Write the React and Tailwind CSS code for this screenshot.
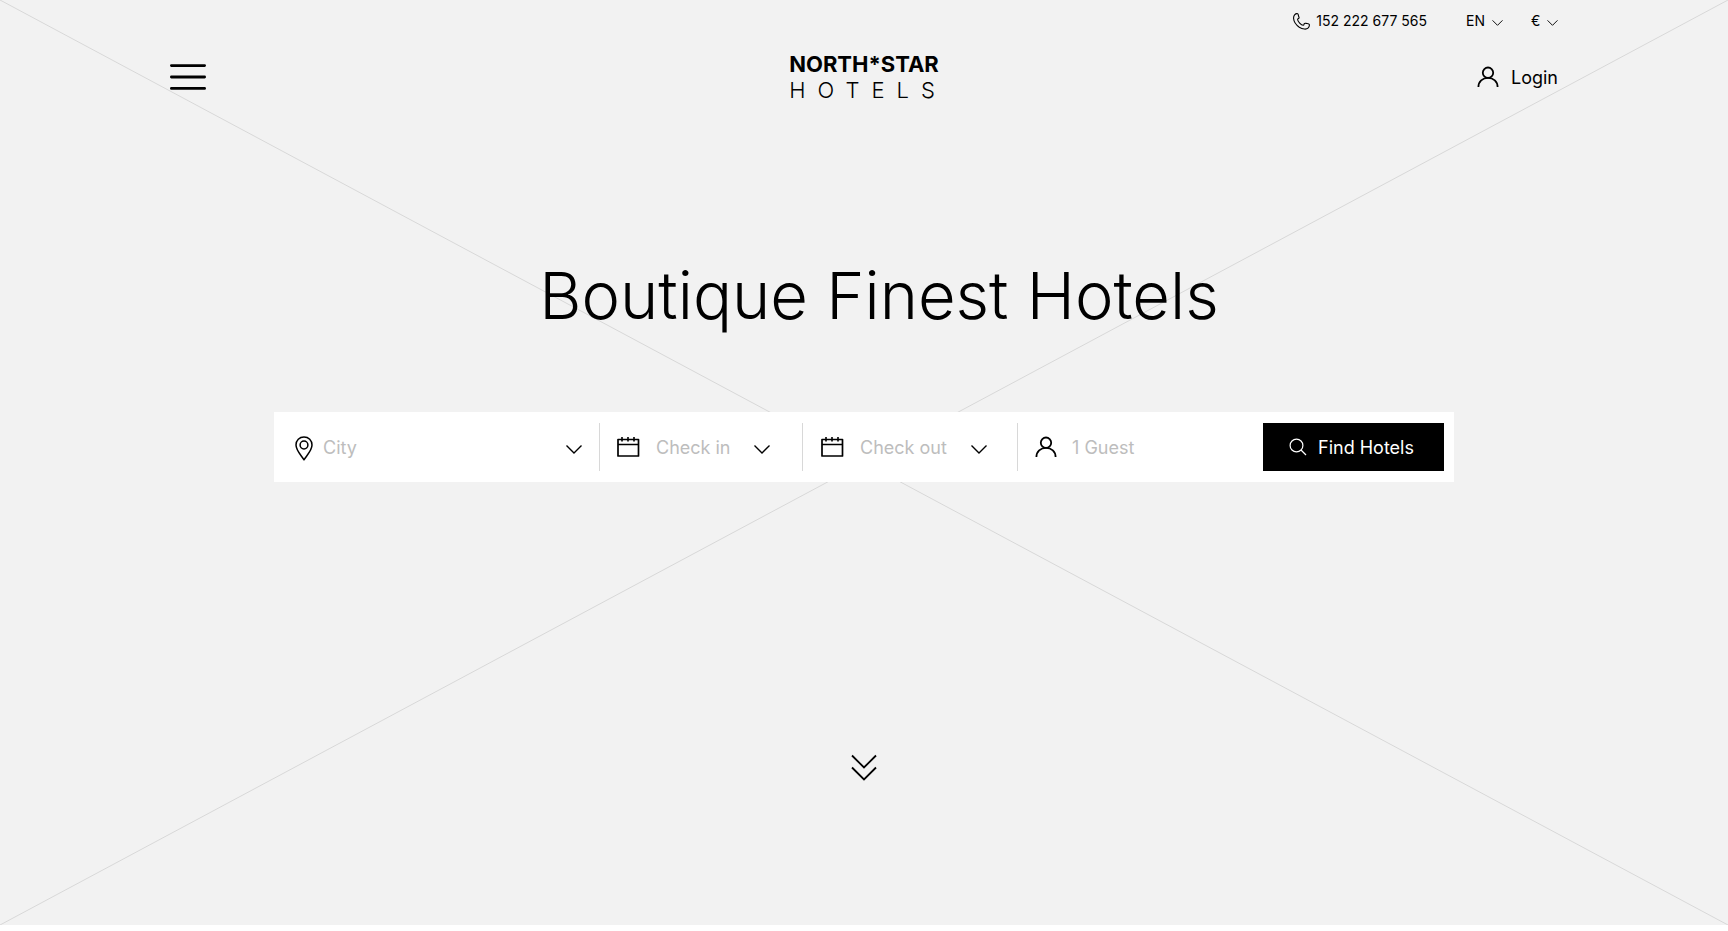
import { useState } from "react"

const ChevronIcon = ({ className }) => (
  <svg viewBox="0 0 16 9" fill="none" stroke="currentColor" className={className} aria-hidden="true">
    <path d="M0.5 0.5L8 8L15.5 0.5" strokeWidth="1.4" />
  </svg>
)

const UserIcon = () => (
  <svg viewBox="0 0 22 22" fill="none" stroke="currentColor" strokeWidth="1.8" className="w-[22px] h-[22px] shrink-0" aria-hidden="true">
    <circle cx="11" cy="6.7" r="5.2" />
    <path d="M1.4 21C1.4 15.6 5.6 11.9 11 11.9C16.4 11.9 20.6 15.6 20.6 21" />
  </svg>
)

const CalendarIcon = () => (
  <svg viewBox="0 0 24 22" fill="none" stroke="currentColor" strokeWidth="1.7" className="w-6 h-[22px] shrink-0" aria-hidden="true">
    <path d="M2 3.5H22.5V20H2Z" strokeLinejoin="round" />
    <path d="M2 8.5H22.5M6 1V5.5M12 1V5.5M18 1V5.5" strokeWidth="1.6" />
  </svg>
)

const PinIcon = () => (
  <svg viewBox="0 0 18 25" fill="none" stroke="currentColor" strokeWidth="1.5" className="w-[18px] h-[25px] mt-0.5 shrink-0" aria-hidden="true">
    <path d="M9 23.8C6.8 20 1 14.6 1 9C1 4.4 4.4 1 9 1C13.6 1 17 4.4 17 9C17 14.6 11.2 20 9 23.8Z" strokeLinejoin="round" />
    <circle cx="9" cy="9" r="3.9" />
  </svg>
)

const SearchIcon = () => (
  <svg viewBox="0 0 18 18" fill="none" stroke="currentColor" strokeWidth="1.2" className="w-[18px] h-[18px] shrink-0" aria-hidden="true">
    <circle cx="7.5" cy="7.5" r="6.4" />
    <path d="M12 12L17 17" />
  </svg>
)

const PhoneIcon = () => (
  <svg viewBox="0 0 17 17" fill="none" stroke="currentColor" strokeWidth="1.1" strokeLinejoin="round" className="w-[17px] h-[17px]" aria-hidden="true">
    <path d="M1.6 1.9C2.4 1 3.9 0.5 4.7 0.8C5.3 1.1 5.3 1.8 5.5 2.8C5.7 3.8 6.3 4.4 6 5C5.7 5.6 4.6 5.7 4.6 6.5C4.7 8.5 8.1 12.1 10.2 12.3C11.1 12.3 11 11.2 11.3 10.6C11.7 10 12.6 10.3 13.7 10.5C15 10.7 16.1 10.8 16.3 11.5C16.5 12.5 16 14.3 15 15.2C13.5 16.5 9.7 16.5 6.3 14.2C3.2 12 0.8 8.6 0.6 5.5C0.5 4.1 0.8 2.8 1.6 1.9Z" />
  </svg>
)

const DropdownField = ({ label, icon, options, className }) => {
  const [value, setValue] = useState("")

  return (
    <label className={`flex items-center min-w-0 h-12 border-r border-[#d8d8d8] ${className}`}>
      {icon}
      <select
        aria-label={label}
        value={value}
        onChange={(e) => setValue(e.target.value)}
        className="flex-1 min-w-0 h-full pt-0.5 appearance-none bg-transparent text-lg text-[#bdbdbd] outline-none"
      >
        <option value="">{label}</option>
        {options.map((option) => (
          <option key={option}>{option}</option>
        ))}
      </select>
      <ChevronIcon className="w-4 h-[9px] shrink-0 mt-1" />
    </label>
  )
}

const Header = () => (
  <header className="w-full max-w-[1388px] mx-auto">
    <div className="flex items-center justify-end h-10 pt-0.5 text-sm">
      <a href="tel:152222677565" className="flex items-center gap-1.5">
        <PhoneIcon />
        152 222 677 565
      </a>
      <label className="flex items-center ml-[39px]">
        <select aria-label="Language" className="w-[26px] appearance-none bg-transparent outline-none">
          <option>EN</option>
          <option>DE</option>
        </select>
        <ChevronIcon className="w-[11px] h-1.5 mt-1" />
      </label>
      <label className="flex items-center ml-7">
        <select aria-label="Currency" className="w-4 appearance-none bg-transparent outline-none">
          <option>€</option>
          <option>$</option>
        </select>
        <ChevronIcon className="w-[11px] h-1.5 mt-1" />
      </label>
    </div>

    <div className="grid grid-cols-3 items-center pt-[11px]">
      <button aria-label="Menu" className="justify-self-start">
        <svg viewBox="0 0 36 26" stroke="currentColor" strokeWidth="2.8" strokeLinecap="round" className="w-9 h-[26px]">
          <path d="M1.4 1.6H34.6M1.4 13H34.6M1.4 24.4H34.6" />
        </svg>
      </button>
      <a href="#" className="justify-self-center text-[22px] leading-[26px]">
        <span className="block font-bold">NORTH*STAR</span>
        <span className="block -mr-3 font-light tracking-[12px]">HOTELS</span>
      </a>
      <a href="#login" className="justify-self-end flex items-center gap-3 text-lg">
        <UserIcon />
        <span className="pt-0.5">Login</span>
      </a>
    </div>
  </header>
)

const SearchBar = () => (
  <form
    onSubmit={(e) => e.preventDefault()}
    className="grid grid-cols-[326fr_203fr_215fr_245fr_181px] items-center w-full max-w-[1180px] mx-auto bg-white py-[11px] pr-2.5"
  >
    <DropdownField label="City" icon={<PinIcon />} options={["Berlin", "Lisbon"]} className="gap-2.5 pl-[21px] pr-[17px]" />
    <DropdownField label="Check in" icon={<CalendarIcon />} options={["Today", "Tomorrow"]} className="gap-4 pl-4 pr-8" />
    <DropdownField label="Check out" icon={<CalendarIcon />} options={["Tomorrow", "Next week"]} className="gap-4 pl-[17px] pr-[30px]" />
    <label className="flex items-center gap-[15px] min-w-0 h-12 pl-[17px]">
      <UserIcon />
      <input
        aria-label="Guests"
        placeholder="1 Guest"
        className="flex-1 min-w-0 h-full text-lg placeholder:text-[#bdbdbd] outline-none"
      />
    </label>
    <button type="submit" className="flex items-center justify-center gap-[11px] h-12 pr-1 bg-black text-lg text-white">
      <SearchIcon />
      <span className="pt-0.5">Find Hotels</span>
    </button>
  </form>
)

const App = () => {
  return (
    <div className="bg-white pb-1.5 min-h-screen flex flex-col font-['Inter',sans-serif] text-black">
      <section className="relative isolate flex-1 flex flex-col px-6 bg-[#f2f2f2]">
        <svg
          viewBox="0 0 100 100"
          preserveAspectRatio="none"
          className="absolute inset-0 -z-10 w-full h-full stroke-[#d8d8d8]"
          aria-hidden="true"
        >
          <path d="M0 0L100 100M100 0L0 100" vectorEffect="non-scaling-stroke" />
        </svg>

        <Header />

        <h1 className="mt-[145px] pl-[30px] text-center text-[65px] leading-[96px] font-light">Boutique Finest Hotels</h1>

        <div className="mt-[68px]">
          <SearchBar />
        </div>

        <button aria-label="Scroll down" className="mt-auto mb-[143px] self-center">
          <svg viewBox="0 0 26 28" fill="none" stroke="currentColor" strokeWidth="1.8" className="w-[26px] h-7">
            <path d="M1 1.5L13 13.5L25 1.5M1 13.5L13 25.5L25 13.5" />
          </svg>
        </button>
      </section>
    </div>
  )
}

export default App
